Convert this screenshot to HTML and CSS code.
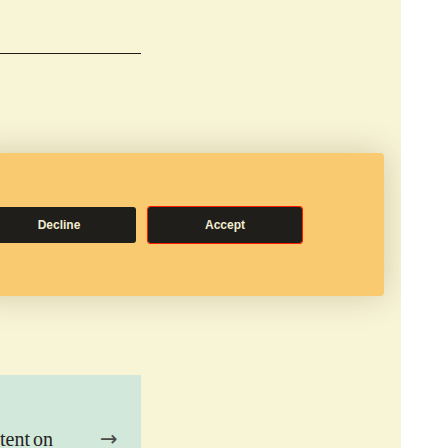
FILE: index.html
```html
<!DOCTYPE html>
<html>
<head>
<meta charset="utf-8">
<link rel="stylesheet" href="styles.css">
</head>
<body>
<div class="page">
  <div class="rule"></div>
  <div class="banner">
    <button class="btn">Decline</button>
    <button class="btn btn-focus">Accept</button>
  </div>
  <div class="teaser">
    <span class="teaser-text">tent on</span>
    <span class="teaser-arrow">→</span>
  </div>
</div>
</body>
</html>
```
FILE: styles.css
```css
html, body {
  margin: 0;
  padding: 0;
  background: #ffffff;
}
.page {
  width: 401px;
  height: 448px;
  overflow: hidden;
  background: #f8f4d6;
  padding-top: 53px;
  box-sizing: border-box;
}
.rule {
  width: 141px;
  height: 1px;
  background: #1f1c17;
}
.banner {
  margin-top: 99px;
  margin-left: -30px;
  width: 414px;
  height: 143px;
  box-sizing: border-box;
  background: #f9ca70;
  border-radius: 4px;
  box-shadow: 0 0 34px rgba(70, 60, 20, 0.22);
  display: flex;
  align-items: center;
  gap: 12px;
  padding-left: 12px;
}
.btn {
  width: 154px;
  height: 36px;
  border: none;
  border-radius: 3px;
  background: #1f1e1a;
  color: #f1ecd0;
  font-family: "Liberation Sans", Arial, sans-serif;
  font-weight: bold;
  font-size: 12px;
  padding: 0;
  margin: 0;
}
.btn-focus {
  border-radius: 2px;
  outline: 1px solid #ff1a00;
}
.teaser {
  margin-top: 79px;
  width: 141px;
  height: 100px;
  background: #d1e8db;
  padding-top: 54px;
  box-sizing: border-box;
  display: flex;
  align-items: flex-start;
  font-family: "Liberation Serif", "Times New Roman", serif;
  font-size: 20px;
  line-height: 20px;
  color: #26221c;
}
.teaser-text {
  width: 100px;
  word-spacing: -2px;
}
.teaser-arrow {
  font-family: "DejaVu Sans", sans-serif;
  font-size: 21px;
  line-height: 20px;
  color: #4a4a45;
}
```
